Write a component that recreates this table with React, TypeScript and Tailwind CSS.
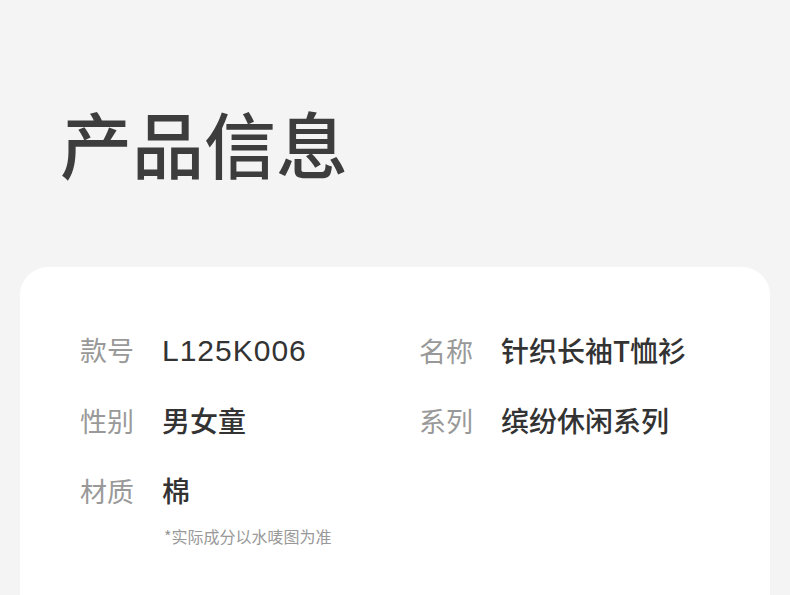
import React from "react";

const font = { fontFamily: '"Noto Sans CJK SC", "Noto Sans", sans-serif' };
const latinFont = { fontFamily: '"Liberation Sans", Arial, sans-serif' };

function Item({ label, value, latin }: { label: string; value: string; latin?: boolean }) {
  return (
    <div className="flex items-baseline h-[40px]">
      <span className="w-[82px] shrink-0 text-[27px] leading-[40px] text-[#999999]">{label}</span>
      {latin ? (
        <span className="text-[30px] leading-[40px] tracking-[1px] text-[#333333]" style={latinFont}>
          {value}
        </span>
      ) : (
        <span className="text-[28px] leading-[40px] font-medium text-[#333333]">{value}</span>
      )}
    </div>
  );
}

export default function App() {
  return (
    <div className="w-[790px] h-[595px] overflow-hidden bg-[#f4f4f4]" style={font}>
      <div className="pt-[102px] pl-[60px] h-[267px]">
        <h1 className="text-[72px] leading-[80px] font-medium text-[#3d3d3d]">产品信息</h1>
      </div>
      <div className="mx-[20px] bg-white rounded-[28px] h-[400px] pt-[63px] pl-[60px]">
        <div className="grid grid-cols-[339px_1fr] gap-y-[30px]">
          <Item label="款号" value="L125K006" latin />
          <Item label="名称" value="针织长袖T恤衫" />
          <Item label="性别" value="男女童" />
          <Item label="系列" value="缤纷休闲系列" />
          <Item label="材质" value="棉" />
        </div>
        <div className="pl-[84px] mt-[14px] text-[16px] leading-[24px] text-[#999999]">*实际成分以水唛图为准</div>
      </div>
    </div>
  );
}
